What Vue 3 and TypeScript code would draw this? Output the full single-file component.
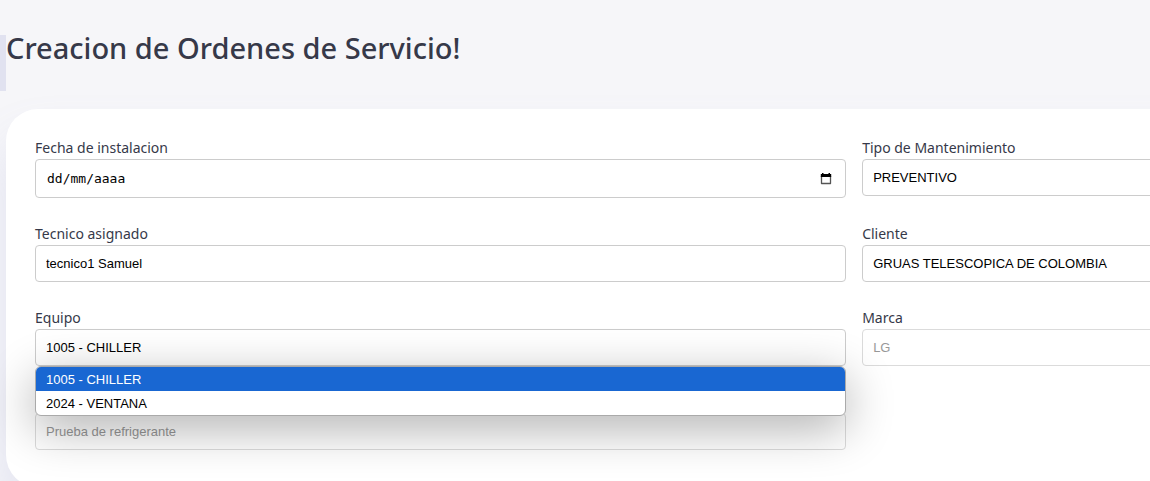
<script setup lang="ts">
import { ref } from 'vue'

const fecha = ref('')
const tipo = ref('PREVENTIVO')
const tecnico = ref('tecnico1 Samuel')
const cliente = ref('GRUAS TELESCOPICA DE COLOMBIA')
const marca = ref('LG')

const equipos = ['1005 - CHILLER', '2024 - VENTANA']
const equipo = ref(equipos[0])
</script>

<template>
  <div class="page">
    <header class="heading">
      <span class="accent"></span>
      <h1>Creacion de Ordenes de Servicio!</h1>
    </header>
    <form class="card" @submit.prevent>
      <div class="field">
        <label for="fecha">Fecha de instalacion</label>
        <div class="control date">
          <input id="fecha" v-model="fecha" type="text" placeholder="dd/mm/aaaa" />
          <button type="button" aria-label="Abrir calendario">
            <svg viewBox="0 0 12 12" width="12" height="12" aria-hidden="true">
              <path d="M1.5 3v7.5h9V3" fill="none" stroke="#555" stroke-width="1.3" stroke-linejoin="round" />
              <path d="M2 0h1.5v1h5V0H10v1h1.2v3H.8V1H2z" fill="#000" />
            </svg>
          </button>
        </div>
      </div>
      <div class="field">
        <label for="tipo">Tipo de Mantenimiento</label>
        <select id="tipo" v-model="tipo" class="control">
          <option>PREVENTIVO</option>
        </select>
      </div>
      <div class="field">
        <label for="tecnico">Tecnico asignado</label>
        <select id="tecnico" v-model="tecnico" class="control">
          <option>tecnico1 Samuel</option>
        </select>
      </div>
      <div class="field">
        <label for="cliente">Cliente</label>
        <select id="cliente" v-model="cliente" class="control">
          <option>GRUAS TELESCOPICA DE COLOMBIA</option>
        </select>
      </div>
      <div class="field">
        <label for="equipo">Equipo</label>
        <select id="equipo" v-model="equipo" class="control">
          <option v-for="e in equipos" :key="e">{{ e }}</option>
        </select>
        <ul class="menu" role="listbox" aria-label="Equipo">
          <li
            v-for="e in equipos"
            :key="e"
            role="option"
            :aria-selected="e === equipo"
            :class="{ selected: e === equipo }"
            @click="equipo = e"
          >{{ e }}</li>
        </ul>
      </div>
      <div class="field">
        <label for="marca">Marca</label>
        <select id="marca" v-model="marca" class="control" disabled>
          <option>LG</option>
        </select>
      </div>
      <div class="field unlabelled">
        <input class="control" type="text" value="Prueba de refrigerante" aria-label="Prueba de refrigerante" disabled />
      </div>
    </form>
  </div>
</template>

<style>
body {
  background: #f6f6f9;
}
</style>

<style scoped>
* {
  box-sizing: border-box;
}
.page {
  height: 100vh;
  overflow: hidden;
  background: #f6f6f9;
  color: #363949;
  font-family: "Noto Sans", sans-serif;
}
.heading {
  display: flex;
  padding-top: 35px;
}
.accent {
  width: 6px;
  height: 56px;
  background: #e1e2f0;
}
h1 {
  margin: 0;
  font-size: 29px;
  line-height: 26px;
  font-weight: 500;
}
.card {
  display: grid;
  grid-template-columns: 1fr 1fr;
  gap: 27px 16px;
  align-items: start;
  width: 147.5%;
  margin: 18px 0 0 6px;
  padding: 30px 29px 37px;
  border-radius: 32px;
  background: #fff;
  box-shadow: 0 32px 48px rgba(132, 139, 200, 0.18);
}
.field {
  position: relative;
  display: flex;
  flex-direction: column;
}
.unlabelled {
  padding-top: 20px;
}
label {
  margin-bottom: 2px;
  font-size: 14px;
  line-height: 18px;
}
.control {
  width: 100%;
  height: 37px;
  margin: 0;
  padding: 0 10px;
  border: 1px solid #ccc;
  border-radius: 4px;
  background: #fff;
  color: #000;
  font-family: "Liberation Sans", Arial, sans-serif;
  font-size: 13px;
  appearance: none;
}
.control:disabled {
  opacity: 0.7;
  color: #6d6d6d;
}
.date {
  display: flex;
  align-items: center;
  height: 39px;
  padding: 0 13px 0 11px;
}
.date input {
  flex: 1;
  min-width: 0;
  padding: 0;
  border: 0;
  outline: 0;
  background: none;
  font-family: "DejaVu Sans Mono", monospace;
  font-size: 13px;
}
.date input::placeholder {
  color: #000;
}
.date button {
  display: flex;
  padding: 0;
  border: 0;
  background: none;
}
.menu {
  position: absolute;
  z-index: 1;
  top: 100%;
  left: 0;
  right: 0;
  margin: 0;
  padding: 0;
  overflow: hidden;
  border: 1px solid #aaa;
  border-radius: 6px;
  background: #fff;
  box-shadow: 0 12px 48px rgba(0, 0, 0, 0.32);
  list-style: none;
  color: #000;
  font-family: "Liberation Sans", Arial, sans-serif;
  font-size: 13px;
  line-height: 23px;
}
.menu li {
  padding: 1px 10px 0;
}
.menu .selected {
  background: #1967d2;
  color: #fff;
}
</style>
